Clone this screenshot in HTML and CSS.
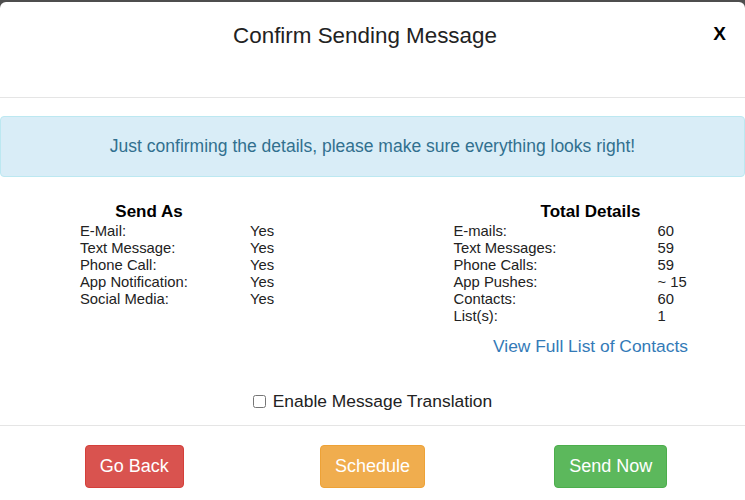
FILE: index.html
```html
<!DOCTYPE html>
<html>
<head>
<meta charset="utf-8">
<link rel="stylesheet" href="styles.css">
</head>
<body>
<div class="modal">
  <div class="modal-header">
    <span></span>
    <h4 class="modal-title">Confirm Sending Message</h4>
    <span class="close">X</span>
  </div>
  <div class="modal-body">
    <div class="alert">Just confirming the details, please make sure everything looks right!</div>
    <div class="details">
      <div class="col col-left">
        <div class="block block-left">
          <div class="heading">Send As</div>
          <div class="rows">
            <span>E-Mail:</span><span>Yes</span>
            <span>Text Message:</span><span>Yes</span>
            <span>Phone Call:</span><span>Yes</span>
            <span>App Notification:</span><span>Yes</span>
            <span>Social Media:</span><span>Yes</span>
          </div>
        </div>
      </div>
      <div class="col col-right">
        <div class="block block-right">
          <div class="heading">Total Details</div>
          <div class="rows">
            <span>E-mails:</span><span>60</span>
            <span>Text Messages:</span><span>59</span>
            <span>Phone Calls:</span><span>59</span>
            <span>App Pushes:</span><span>~ 15</span>
            <span>Contacts:</span><span>60</span>
            <span>List(s):</span><span>1</span>
          </div>
          <a class="link" href="#">View Full List of Contacts</a>
        </div>
      </div>
    </div>
    <label class="translate"><input type="checkbox"> Enable Message Translation</label>
  </div>
  <div class="modal-footer">
    <button class="btn btn-danger">Go Back</button>
    <button class="btn btn-warning">Schedule</button>
    <button class="btn btn-success">Send Now</button>
  </div>
</div>
</body>
</html>
```

FILE: styles.css
```css
html, body {
  margin: 0;
  padding: 0;
}
body {
  background: #4e4e4e;
  font-family: "Liberation Sans", Arial, sans-serif;
  color: #222;
  width: 745px;
  height: 500px;
  overflow: hidden;
}
.modal {
  margin-top: 2px;
  background: #fff;
  border-radius: 6px 6px 0 0;
  width: 745px;
  height: 498px;
}
.modal-header {
  height: 95px;
  border-bottom: 1px solid #e5e5e5;
  display: grid;
  grid-template-columns: 1fr auto 1fr;
  align-items: start;
}
.modal-title {
  margin: 0 15px 0 0;
  padding-top: 21px;
  font-size: 22.4px;
  font-weight: normal;
  line-height: 26px;
  color: #222;
}
.close {
  justify-self: end;
  margin-right: 19px;
  margin-top: 20px;
  font-size: 19px;
  font-weight: bold;
  line-height: 24px;
  color: #000;
}
.modal-body {
  padding: 18px 0 13px;
}
.alert {
  height: 59px;
  line-height: 59px;
  background: #d9edf7;
  border: 1px solid #bce8f1;
  border-radius: 4px;
  color: #31708f;
  font-size: 17.5px;
  text-align: center;
}
.details {
  display: grid;
  grid-template-columns: 356.5px 356.5px;
  padding: 0 15px;
  margin-top: 25px;
}
.block-left {
  margin-left: 65px;
  width: 240px;
}
.block-left .heading {
  width: 138px;
}
.block-left .rows {
  grid-template-columns: 170px 1fr;
}
.block-right {
  margin-left: 82px;
  width: 274px;
}
.block-right .heading {
  width: 274px;
}
.block-right .rows {
  grid-template-columns: 204px 1fr;
}
.heading {
  font-size: 17px;
  font-weight: bold;
  line-height: 20px;
  text-align: center;
  color: #000;
}
.rows {
  display: grid;
  margin-top: 1px;
  font-size: 14.8px;
  line-height: 17px;
  color: #222;
}
.link {
  display: block;
  margin-top: 11px;
  text-align: center;
  font-size: 17.4px;
  line-height: 20px;
  color: #337ab7;
  text-decoration: none;
}
.translate {
  display: flex;
  justify-content: center;
  align-items: center;
  margin-top: 34px;
  font-size: 17.4px;
  line-height: 22px;
  color: #222;
}
.translate input {
  width: 13px;
  height: 13px;
  margin: 0 7px 0 0;
}
.modal-footer {
  border-top: 1px solid #e5e5e5;
  display: grid;
  grid-template-columns: repeat(3, 1fr);
  justify-items: center;
  padding: 19px 15px 0;
}
.btn {
  height: 43px;
  padding: 0 14px;
  border-radius: 4px;
  border: 1px solid transparent;
  font-family: "Liberation Sans", Arial, sans-serif;
  font-size: 18px;
  color: #fff;
}
.btn-danger {
  background: #d9534f;
  border-color: #d43f3a;
}
.btn-warning {
  background: #f0ad4e;
  border-color: #eea236;
}
.btn-success {
  background: #5cb85c;
  border-color: #4cae4c;
}
```
